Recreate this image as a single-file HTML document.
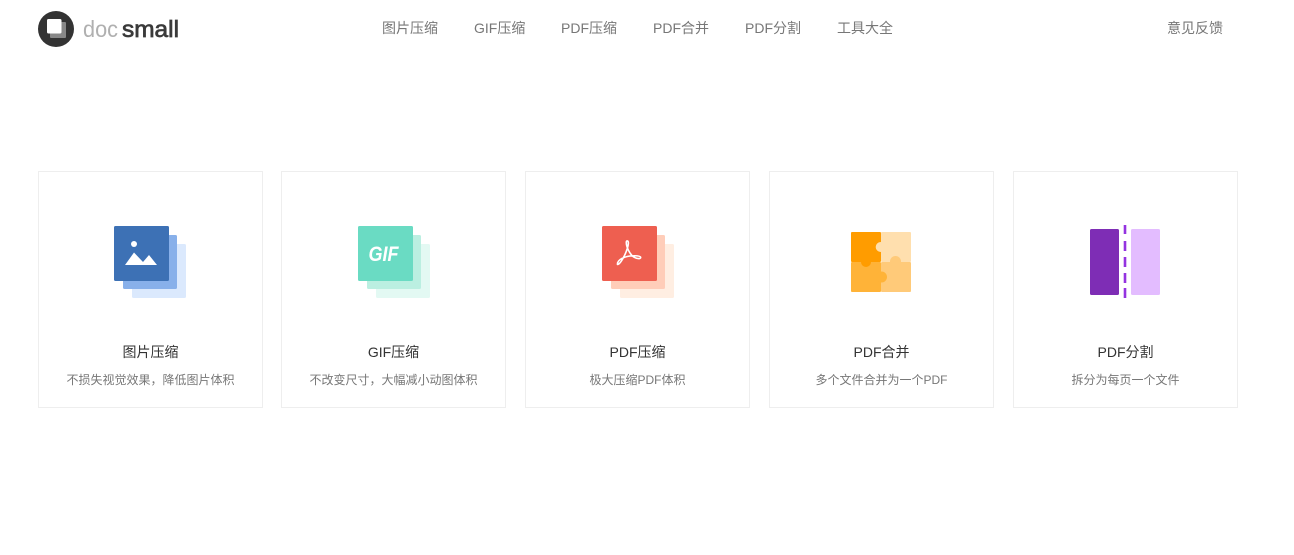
<!DOCTYPE html>
<html lang="zh"><head><meta charset="utf-8"><title>docsmall</title>
<style>
*{box-sizing:border-box}
html,body{margin:0;padding:0;background:#fff}
body{width:1294px;height:555px;position:relative;overflow:hidden;font-family:"Liberation Sans","Noto Sans CJK SC",sans-serif}
.n{position:absolute;top:18px;font-size:14px;line-height:20px;color:#777;white-space:nowrap}
.c{position:absolute;top:171px;width:225px;height:237px;border:1px solid #eee;background:#fff}
.t{position:absolute;left:0;right:0;top:170px;text-align:center;font-size:14px;line-height:20px;color:#333}
.d{position:absolute;left:0;right:0;top:199px;text-align:center;font-size:12px;line-height:18px;color:#777}
svg{position:absolute}
</style></head><body>
<svg style="left:38px;top:11px" width="150" height="36" viewBox="0 0 150 36">
<circle cx="18" cy="18" r="18" fill="#333"/>
<rect x="12" y="11" width="16" height="16" rx="1" fill="#888"/>
<rect x="9" y="8" width="14.500" height="14.500" rx="1.500" fill="#fff"/>
<text x="45" y="26" font-family="Liberation Sans" font-size="23" fill="#b0b0b0" textLength="35" lengthAdjust="spacingAndGlyphs">doc</text>
<text x="84" y="26" font-family="Liberation Sans" font-size="23" fill="#3a3a3a" stroke="#3a3a3a" stroke-width=".7" textLength="57" lengthAdjust="spacingAndGlyphs">small</text>
</svg>
<div class="n" style="left:382px">图片压缩</div>
<div class="n" style="left:474px">GIF压缩</div>
<div class="n" style="left:561px">PDF压缩</div>
<div class="n" style="left:653px">PDF合并</div>
<div class="n" style="left:745px">PDF分割</div>
<div class="n" style="left:837px">工具大全</div>
<div class="n" style="left:1167px">意见反馈</div>

<div class="c" style="left:38px"><div class="t">图片压缩</div><div class="d">不损失视觉效果，降低图片体积</div></div>
<div class="c" style="left:281px"><div class="t">GIF压缩</div><div class="d">不改变尺寸，大幅减小动图体积</div></div>
<div class="c" style="left:525px"><div class="t">PDF压缩</div><div class="d">极大压缩PDF体积</div></div>
<div class="c" style="left:769px"><div class="t">PDF合并</div><div class="d">多个文件合并为一个PDF</div></div>
<div class="c" style="left:1013px"><div class="t">PDF分割</div><div class="d">拆分为每页一个文件</div></div>

<svg style="left:114px;top:226px" width="72" height="72" viewBox="0 0 72 72">
<rect x="18" y="18" width="54" height="54" rx="1.500" fill="#dbe9fd"/>
<rect x="9" y="9" width="54" height="54" rx="1.500" fill="#88b0ea"/>
<rect width="55" height="55" rx="1.500" fill="#3d71b5"/>
<circle cx="20" cy="18" r="3" fill="#fff"/>
<path d="M11 39 L20 26.500 L29 36 L35 29 L43 39 Z" fill="#fff"/>
</svg>
<svg style="left:358px;top:226px" width="72" height="72" viewBox="0 0 72 72">
<rect x="18" y="18" width="54" height="54" rx="1.500" fill="#e3f9f3"/>
<rect x="9" y="9" width="54" height="54" rx="1.500" fill="#bbefe1"/>
<rect width="55" height="55" rx="1.500" fill="#6adbc3"/>
<text x="10.500" y="35" font-family="Liberation Sans" font-size="21" font-weight="bold" font-style="italic" fill="#fff" textLength="30" lengthAdjust="spacingAndGlyphs">GIF</text>
</svg>
<svg style="left:602px;top:226px" width="72" height="72" viewBox="0 0 72 72">
<rect x="18" y="18" width="54" height="54" rx="1.500" fill="#ffeee2"/>
<rect x="9" y="9" width="54" height="54" rx="1.500" fill="#ffcdb9"/>
<rect width="55" height="55" rx="1.500" fill="#ee5f50"/>
<path d="M15.500 38.500 C17.500 38.500 20.500 33.500 22.500 29.500 C24.500 25.500 26.800 19 26.300 16.300 C26 14.500 24.300 14.500 24.300 16.500 C24.300 21 27.500 27.500 31 30.500 C33.500 32.500 38.700 33.500 38.700 31.500 C38.700 29.700 33 29.500 28 30 C23 30.600 15 33.500 15.500 38.500 Z" fill="none" stroke="#fff" stroke-width="1.600" stroke-linejoin="round"/>
</svg>
<svg style="left:851px;top:232px" width="60" height="60" viewBox="0 0 60 60">
<rect x="30" y="0" width="30" height="30" rx="1" fill="#ffdfae"/>
<rect x="0" y="30" width="30" height="30" rx="1" fill="#ffb338"/>
<rect x="30" y="30" width="30" height="30" rx="1" fill="#ffca79"/>
<rect x="0" y="0" width="30" height="30" rx="1" fill="#ff9c00"/>
<circle cx="29.700" cy="15" r="5" fill="#ffdfae"/>
<circle cx="15" cy="30" r="5" fill="#ff9c00"/>
<circle cx="44.500" cy="29.500" r="5.500" fill="#ffca79"/>
<circle cx="30.500" cy="45" r="5.500" fill="#ffb338"/>
</svg>
<svg style="left:1090px;top:225px" width="70" height="74" viewBox="0 0 70 74">
<rect x="0" y="4" width="29" height="66" rx="1.500" fill="#7e2db5"/>
<rect x="41" y="4" width="29" height="66" rx="1.500" fill="#e3bcff"/>
<g fill="#9433e0"><rect x="33.700" y="0" width="2.600" height="9"/><rect x="33.700" y="16" width="2.600" height="10"/><rect x="33.700" y="32" width="2.600" height="10"/><rect x="33.700" y="48" width="2.600" height="10"/><rect x="33.700" y="63" width="2.600" height="10"/></g>
</svg>
</body></html>
